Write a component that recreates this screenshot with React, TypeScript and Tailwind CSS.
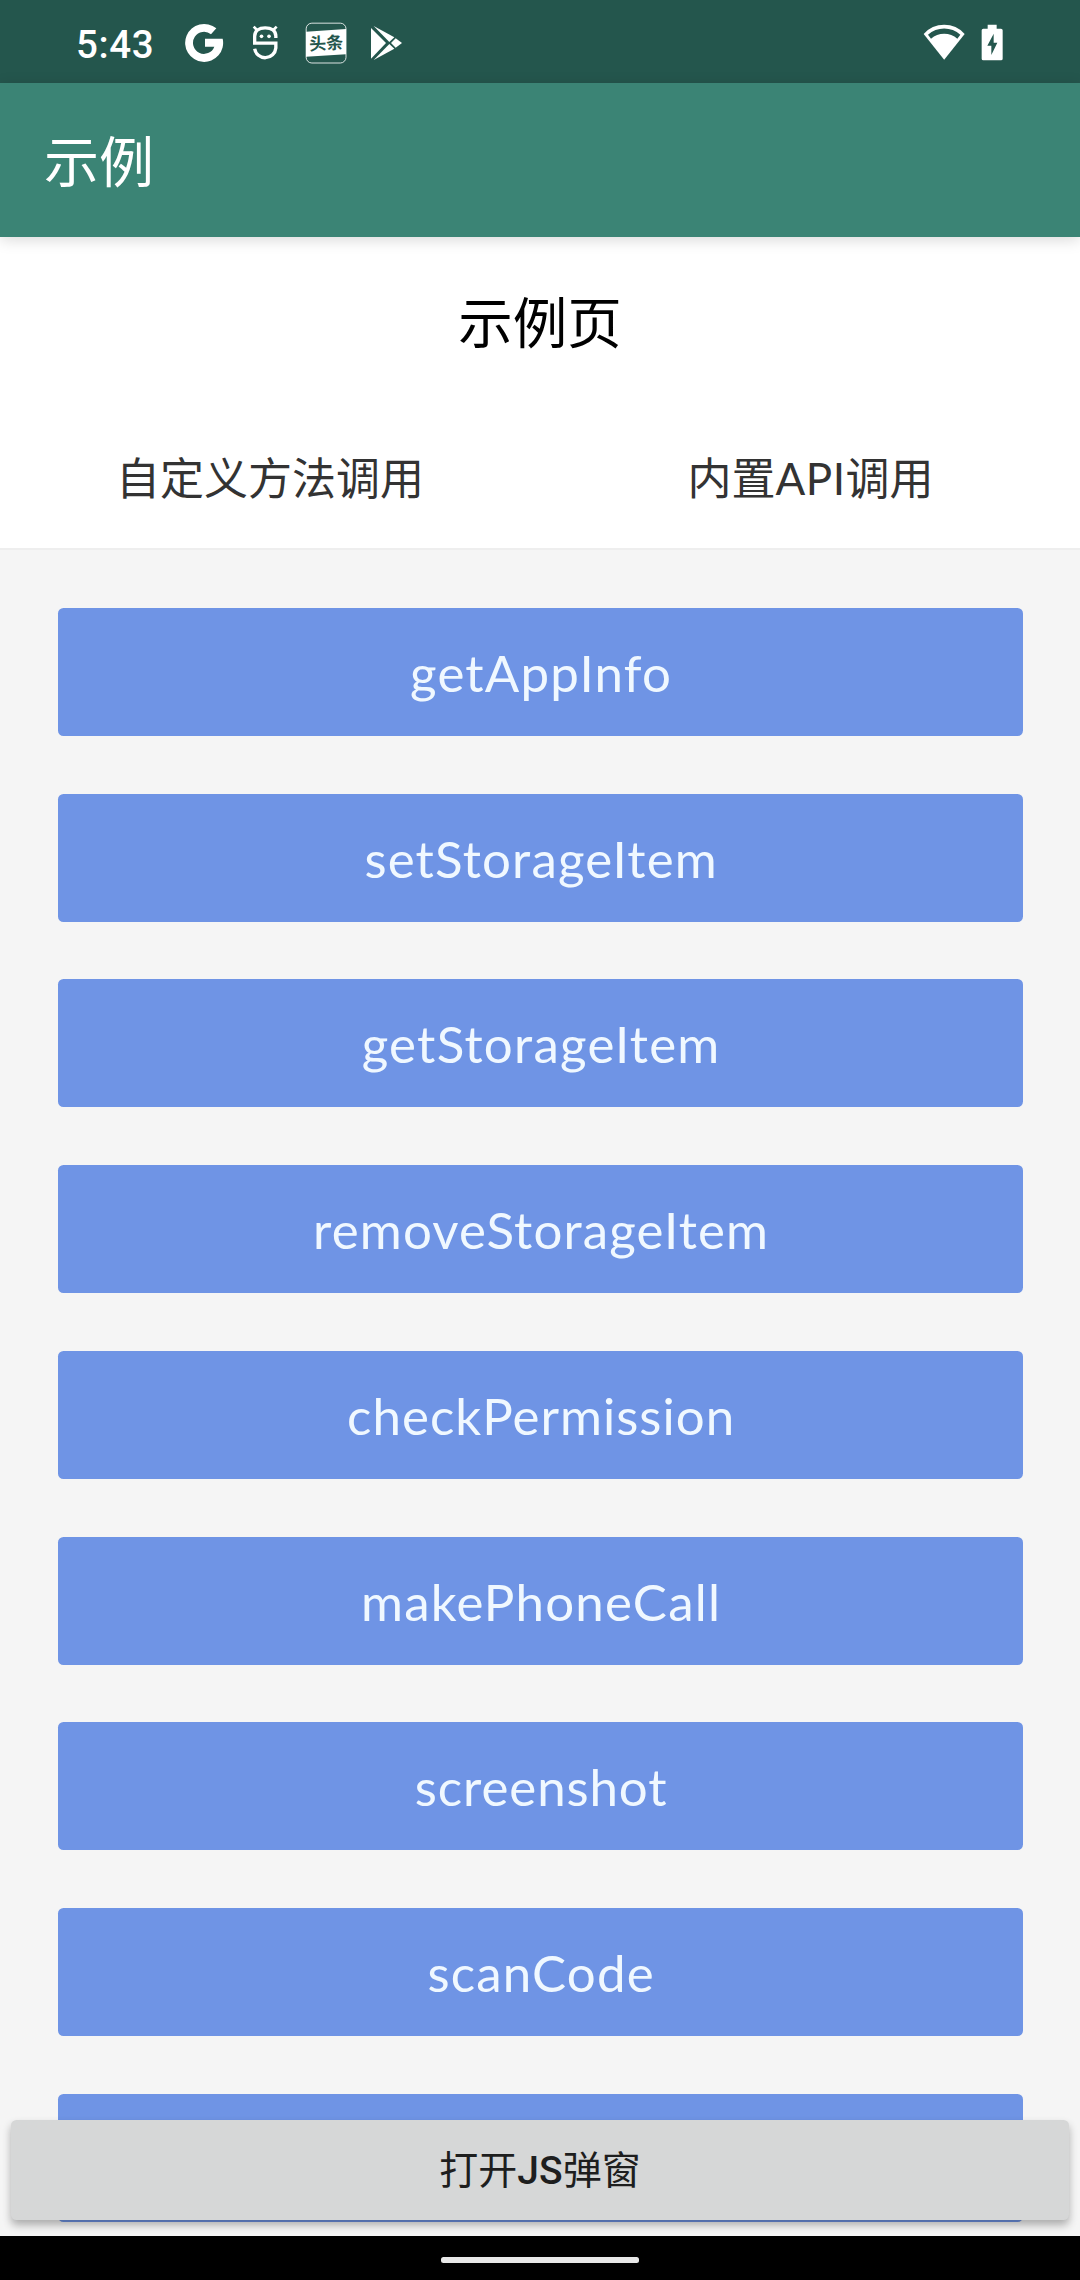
const actions = [
  { label: "getAppInfo", tracking: "tracking-[1.22px]" },
  { label: "setStorageItem", tracking: "tracking-[1.17px]" },
  { label: "getStorageItem", tracking: "tracking-[1.27px]" },
  { label: "removeStorageItem", tracking: "tracking-[1.16px]" },
  { label: "checkPermission", tracking: "tracking-[1.02px]" },
  { label: "makePhoneCall", tracking: "tracking-[1.2px]" },
  { label: "screenshot", tracking: "tracking-[0.9px]" },
  { label: "scanCode", tracking: "tracking-[1.23px]" },
  { label: "", tracking: "" },
];

// Status icons share one grid: three units to a pixel.
function GoogleIcon() {
  return (
    <svg className="ml-[31px] h-[40px] w-[40px]" viewBox="403 70 120 120" fill="#fff">
      <path d="M500 86A57 57 0 1 0 519 117H466V141H494A33 33 0 1 1 484 104Z" />
    </svg>
  );
}

function BugIcon() {
  return (
    <svg className="ml-[26px] h-[40px] w-[30px]" viewBox="601 70 90 120" fill="none">
      <path
        d="M678.500 115V110C678.500 93 665 84.500 646.500 84.500S615 93 615 110V130.500H678.500V145A32 32 0 0 1 615 147"
        stroke="#fff"
        strokeWidth="10"
      />
      <path d="M612 81L622 91M681 81L671 91" stroke="#fff" strokeWidth="8" />
      <circle cx="635.500" cy="110" r="5.500" fill="#fff" />
      <circle cx="658" cy="110" r="5.500" fill="#fff" />
    </svg>
  );
}

function ToutiaoIcon() {
  return (
    <svg className="ml-[25px] h-[42px] w-[42px]" viewBox="766 67 126 126">
      <rect x="769.500" y="70.500" width="119.500" height="119.500" rx="17" fill="none" stroke="#fff" strokeWidth="2.500" />
      <path d="M769 96L889 88V164L769 171Z" fill="#fff" />
      <text
        x="829.500"
        y="149"
        textAnchor="middle"
        transform="rotate(-3 829 130)"
        className="fill-[#24564d] font-['Noto_Sans_CJK_SC',sans-serif] text-[51px] font-bold"
      >
        头条
      </text>
    </svg>
  );
}

function PlayIcon() {
  return (
    <svg className="ml-[22px] h-[40px] w-[36px]" viewBox="960 70 108 120" fill="#fff">
      <path d="M966 85L1011 130L966 177Z" />
      <path d="M974 79L1036 113L1021 127Z" />
      <path d="M1040 116L1059 130L1040 144L1026 130Z" />
      <path d="M974 181L1036 147L1021 133Z" />
    </svg>
  );
}

function WifiIcon() {
  return (
    <svg className="h-[40px] w-[44px]" viewBox="67 70 132 120">
      <path d="M133.500 180L72 103A81.500 81.500 0 0 1 195 103Z" fill="#fff" />
      <path d="M85 105A72 72 0 0 1 182 105L173 117A60 60 0 0 0 94 117Z" fill="#24564d" />
    </svg>
  );
}

function BatteryIcon() {
  return (
    <svg className="ml-[14px] h-[40px] w-[24px]" viewBox="241 70 72 120" fill="#fff">
      <path d="M264 75H291V87H304Q309 87 309 92V177Q309 182 304 182H251Q246 182 246 177V92Q246 87 251 87H264Z" />
      <path d="M282 102L263 138H275V166L293 129H282Z" fill="#24564d" />
    </svg>
  );
}

export default function App() {
  return (
    <div className="relative flex h-[2280px] w-[1080px] flex-col overflow-hidden bg-[#f5f5f5] font-[Lato,'Noto_Sans_CJK_SC',sans-serif]">
      <div className="flex h-[83px] shrink-0 items-center bg-[#24564d] pt-[3px] pr-[76px] pl-[76px]">
        <span className="w-[77px] pt-[3px] font-[Roboto,sans-serif] text-[38.5px] font-medium tracking-[0.6px] whitespace-nowrap text-white">
          5:43
        </span>
        <GoogleIcon />
        <BugIcon />
        <ToutiaoIcon />
        <PlayIcon />
        <div className="ml-auto flex items-center">
          <WifiIcon />
          <BatteryIcon />
        </div>
      </div>

      <header className="relative z-10 flex h-[154px] shrink-0 items-start bg-[#3b8475] pl-[44px] shadow-[0_3px_14px_rgba(0,0,0,0.15)]">
        <h1 className="font-['Noto_Sans_CJK_SC',sans-serif] text-[55px] leading-[151px] text-white">示例</h1>
      </header>

      <section className="flex h-[313px] shrink-0 flex-col border-b-2 border-[#eeeeee] bg-white">
        <h2 className="pb-[6px] text-center font-['Noto_Sans_CJK_SC',sans-serif] text-[54.5px] leading-[166px] text-black">示例页</h2>
        <div className="grid grid-cols-2 text-center text-[44px] leading-[139px] text-[#333333]">
          <div>自定义方法调用</div>
          <div className="pl-[1px]">
            内置<span className="tracking-[0.5px]">API</span>调用
          </div>
        </div>
      </section>

      <main className="flex min-h-0 flex-1 flex-col gap-[57.75px] overflow-hidden pt-[57.75px] pr-[57px] pl-[57.75px]">
        {actions.map((a, i) => (
          <button
            key={i}
            className={`h-[128px] shrink-0 rounded-[5.5px] bg-[#6f94e5] pt-px pl-[1.5px] text-[51px] leading-[127px] text-[#f0f8ff] ${a.tracking}`}
          >
            {a.label}
          </button>
        ))}
      </main>

      <div className="absolute inset-x-[11px] bottom-[60px] z-10 h-[100px] rounded-[5.5px] bg-[#d6d7d7] text-center font-[Roboto,'Noto_Sans_CJK_SC',sans-serif] text-[39px] leading-[102px] text-[#1e1e1e] shadow-[0_5px_9px_rgba(0,0,0,0.3)]">
        打开<span className="font-medium">JS</span>弹窗
      </div>

      <nav className="relative z-20 flex h-[44px] shrink-0 items-center justify-center bg-black">
        <div className="mt-[4px] h-[6px] w-[198px] rounded-[2.5px] bg-[#e8e8e8]" />
      </nav>
    </div>
  );
}
